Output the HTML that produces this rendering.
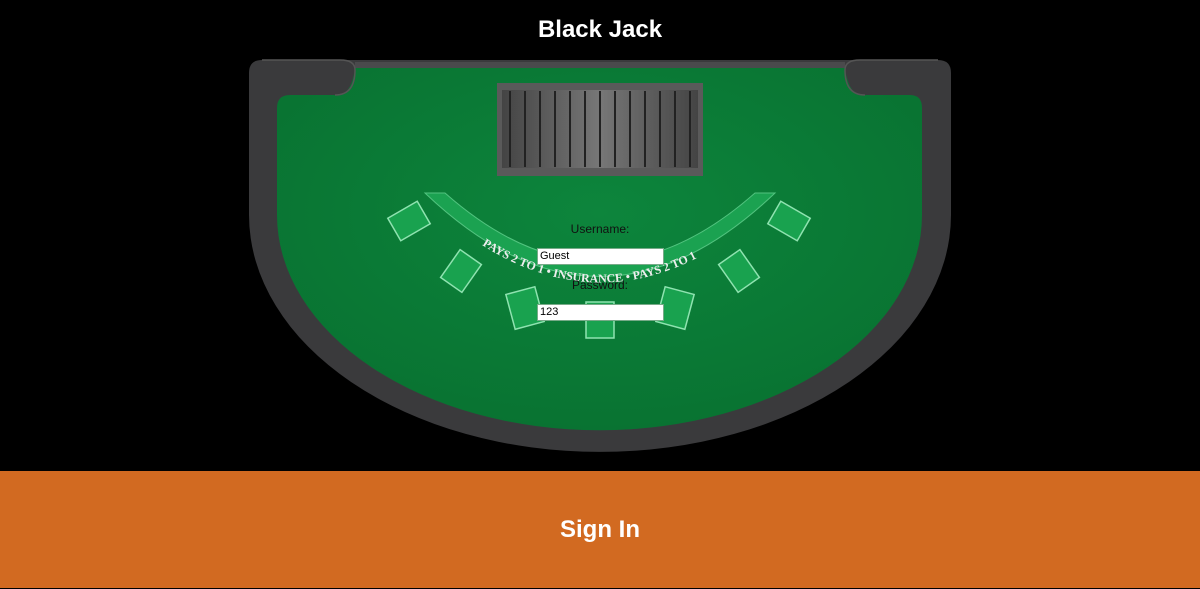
<!DOCTYPE html>
<html><head><meta charset="utf-8"><style>
html,body{margin:0;padding:0;width:1200px;height:588px;background:#000;overflow:hidden;font-family:"Liberation Sans",sans-serif}
.t{position:absolute;top:16px;left:0;width:1200px;text-align:center;color:#fff;font-weight:bold;font-size:24px}
.bar{position:absolute;left:0;top:471px;width:1200px;height:117px;background:#d26a21;color:#fff;font-weight:bold;font-size:24px;text-align:center;line-height:118px}
.lab{position:absolute;left:0;width:1200px;text-align:center;font-size:12px;color:#111}
.in{position:absolute;left:537px;width:123px;height:15px;background:#fff;border:1px solid #7a8;font-size:11px;line-height:15px;padding-left:2px;box-sizing:content-box;color:#000}
</style></head><body>
<div class="t">Black Jack</div>
<svg width="1200" height="588" style="position:absolute;left:0;top:0">
<defs>
<radialGradient id="felt" cx=".5" cy=".4" r=".7"><stop offset="0" stop-color="#0d853c"/><stop offset="1" stop-color="#087030"/></radialGradient>
<linearGradient id="tray" x1="0" y1="0" x2="1" y2="0"><stop offset="0" stop-color="#444"/><stop offset=".5" stop-color="#777"/><stop offset="1" stop-color="#444"/></linearGradient>
</defs>
<path d="M262 60 H938 Q951 60 951 73 V215 A351 237 0 0 1 249 215 V73 Q249 60 262 60Z" fill="#3a3a3c"/>
<path d="M277 108 Q277 95 290 95 H340 Q352 92 355 68 H845 Q848 92 860 95 H910 Q922 95 922 108 V215 A322 215 0 0 1 277 215Z" fill="url(#felt)"/>
<path d="M355 62 H845 V68 H355Z" fill="#4a4a4c"/>
<path d="M262 60 H340 Q355 60 355 70 Q355 95 335 95" fill="none" stroke="#555" stroke-width="1.5"/>
<path d="M938 60 H860 Q845 60 845 70 Q845 95 865 95" fill="none" stroke="#555" stroke-width="1.5"/>
<rect x="497" y="83" width="206" height="93" fill="#5a5a5a"/>
<rect x="502" y="90" width="196" height="78" fill="url(#tray)"/>
<g stroke="#222" stroke-width="2">
<line x1="510" y1="91" x2="510" y2="167"/><line x1="525" y1="91" x2="525" y2="167"/><line x1="540" y1="91" x2="540" y2="167"/><line x1="555" y1="91" x2="555" y2="167"/><line x1="570" y1="91" x2="570" y2="167"/><line x1="585" y1="91" x2="585" y2="167"/><line x1="600" y1="91" x2="600" y2="167"/><line x1="615" y1="91" x2="615" y2="167"/><line x1="630" y1="91" x2="630" y2="167"/><line x1="645" y1="91" x2="645" y2="167"/><line x1="660" y1="91" x2="660" y2="167"/><line x1="675" y1="91" x2="675" y2="167"/><line x1="690" y1="91" x2="690" y2="167"/>
</g>
<path d="M425 193 L445 193 Q600 330 755 193 L775 193 Q600 360 425 193Z" fill="#1ea956" opacity=".85" stroke="#5fd08c"/>
<text font-family="Liberation Serif" font-size="12" fill="#eee" font-weight="bold"><textPath href="#arc">PAYS 2 TO 1 • INSURANCE • PAYS 2 TO 1</textPath></text>
<path id="arc" d="M482 245 Q600 320 720 245" fill="none"/>
<g fill="#19a24f" stroke="#8fe3b0" stroke-width="1.5">
<rect x="392" y="208" width="34" height="26" transform="rotate(-30 409 221)"/>
<rect x="444" y="258" width="34" height="26" transform="rotate(-55 461 271)"/>
<rect x="510" y="290" width="30" height="36" transform="rotate(-15 525 308)"/>
<rect x="586" y="302" width="28" height="36"/>
<rect x="660" y="290" width="30" height="36" transform="rotate(15 675 308)"/>
<rect x="722" y="258" width="34" height="26" transform="rotate(55 739 271)"/>
<rect x="772" y="208" width="34" height="26" transform="rotate(30 789 221)"/>
</g>
</svg>
<div class="lab" style="top:222px">Username:</div>
<div class="in" style="top:248px">Guest</div>
<div class="lab" style="top:278px">Password:</div>
<div class="in" style="top:304px">123</div>
<div class="bar">Sign In</div>
</body></html>
